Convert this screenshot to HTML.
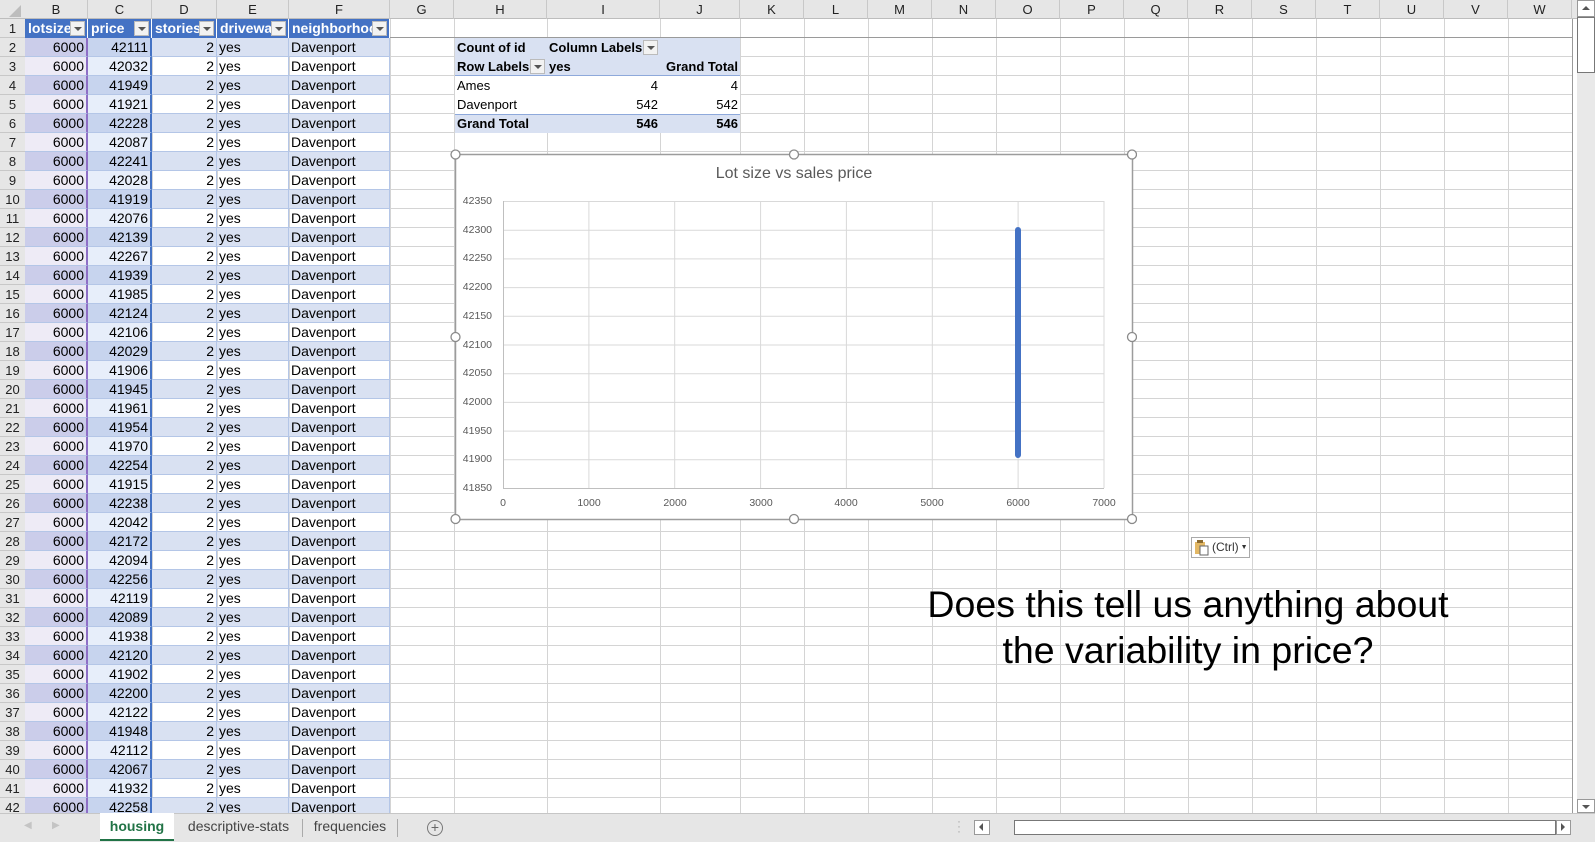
<!DOCTYPE html>
<html><head><meta charset="utf-8"><style>
*{margin:0;padding:0;box-sizing:border-box}
body{width:1595px;height:842px;overflow:hidden;background:#fff;font-family:"Liberation Sans",Arial,sans-serif;font-size:14px;color:#000;position:relative}
.abs{position:absolute}
.ch{position:absolute;top:0;height:19px;text-align:center;line-height:19px;font-size:13px;color:#222;border-right:1px solid #c8c8c8}
.rh{position:absolute;left:0;width:25px;height:19px;text-align:center;line-height:19px;font-size:13px;color:#222;background:#e6e6e6;border-bottom:1px solid #c8c8c8}
.tb .tr{position:absolute;left:25px;height:19px;display:flex;width:365px}
.tr i{font-style:normal;height:19px;line-height:19px;border-right:1px solid #b4c6e7;border-bottom:1px solid #b4c6e7;padding:0 2px;white-space:nowrap;overflow:hidden}
.tr i:nth-child(1){width:63px;text-align:right;background:#eeebf6;border-right:2px solid #8e6fc6}
.tr i:nth-child(2){width:64px;text-align:right;background:#e7eefa;border-right:2px solid #4472c4}
.tr i:nth-child(3){width:65px;text-align:right}
.tr i:nth-child(4){width:72px}
.tr i:nth-child(5){width:101px}
.tb .tr:nth-child(odd){background:#d9e1f2}
.tb .tr:nth-child(odd) i:nth-child(1){background:#cbcdea}
.tb .tr:nth-child(odd) i:nth-child(2){background:#c7d4ee}
.hd{position:absolute;top:19px;height:19px;background:#4472c4;color:#fff;font-weight:bold;line-height:19px;padding-left:3px;border-right:1px solid #fff;overflow:hidden;white-space:nowrap}
.dd{position:absolute;top:2px;right:2px;width:15px;height:15px;background:#f2f2f2;border:1px solid #bbb}
.dd:after{content:"";position:absolute;left:3px;top:5px;border-left:4px solid transparent;border-right:4px solid transparent;border-top:4px solid #555}
.pv{position:absolute;height:19px;line-height:19px;white-space:nowrap;font-size:13px}
.tab{position:absolute;top:813px;height:29px;line-height:27px;font-size:14px;color:#444;text-align:center}
</style></head><body>

<svg class="abs" style="left:0;top:0" width="1595" height="842">
<g stroke="#d4d4d4" stroke-width="1">
<path d="M88.5 19V813M152.5 19V813M217.5 19V813M289.5 19V813M390.5 19V813M454.5 19V813M547.5 19V813M660.5 19V813M740.5 19V813M804.5 19V813M868.5 19V813M932.5 19V813M996.5 19V813M1060.5 19V813M1124.5 19V813M1188.5 19V813M1252.5 19V813M1316.5 19V813M1380.5 19V813M1444.5 19V813M1508.5 19V813"/>
<path d="M25 56.5H1572M25 75.5H1572M25 94.5H1572M25 113.5H1572M25 132.5H1572M25 151.5H1572M25 170.5H1572M25 189.5H1572M25 208.5H1572M25 227.5H1572M25 246.5H1572M25 265.5H1572M25 284.5H1572M25 303.5H1572M25 322.5H1572M25 341.5H1572M25 360.5H1572M25 379.5H1572M25 398.5H1572M25 417.5H1572M25 436.5H1572M25 455.5H1572M25 474.5H1572M25 493.5H1572M25 512.5H1572M25 531.5H1572M25 550.5H1572M25 569.5H1572M25 588.5H1572M25 607.5H1572M25 626.5H1572M25 645.5H1572M25 664.5H1572M25 683.5H1572M25 702.5H1572M25 721.5H1572M25 740.5H1572M25 759.5H1572M25 778.5H1572M25 797.5H1572"/>
</g>
<path d="M25 37.5H1572" stroke="#9a9a9a"/>
<path d="M1572.5 19V813" stroke="#9a9a9a"/>
</svg>

<div class="abs" style="left:0;top:0;width:1577px;height:19px;background:#e6e6e6;border-bottom:1px solid #bdbdbd"></div>
<svg class="abs" style="left:8px;top:4px" width="14" height="14"><path d="M13 1V13H1Z" fill="#bdbdbd"/></svg>
<div class="ch" style="left:25px;width:63px">B</div><div class="ch" style="left:88px;width:64px">C</div><div class="ch" style="left:152px;width:65px">D</div><div class="ch" style="left:217px;width:72px">E</div><div class="ch" style="left:289px;width:101px">F</div><div class="ch" style="left:390px;width:64px">G</div><div class="ch" style="left:454px;width:93px">H</div><div class="ch" style="left:547px;width:113px">I</div><div class="ch" style="left:660px;width:80px">J</div><div class="ch" style="left:740px;width:64px">K</div><div class="ch" style="left:804px;width:64px">L</div><div class="ch" style="left:868px;width:64px">M</div><div class="ch" style="left:932px;width:64px">N</div><div class="ch" style="left:996px;width:64px">O</div><div class="ch" style="left:1060px;width:64px">P</div><div class="ch" style="left:1124px;width:64px">Q</div><div class="ch" style="left:1188px;width:64px">R</div><div class="ch" style="left:1252px;width:64px">S</div><div class="ch" style="left:1316px;width:64px">T</div><div class="ch" style="left:1380px;width:64px">U</div><div class="ch" style="left:1444px;width:64px">V</div><div class="ch" style="left:1508px;width:64px">W</div>

<div class="abs" style="left:0;top:19px;width:25px;height:794px;background:#e6e6e6;border-right:1px solid #bdbdbd"></div>
<div class="rh" style="top:19px">1</div><div class="rh" style="top:38px">2</div><div class="rh" style="top:57px">3</div><div class="rh" style="top:76px">4</div><div class="rh" style="top:95px">5</div><div class="rh" style="top:114px">6</div><div class="rh" style="top:133px">7</div><div class="rh" style="top:152px">8</div><div class="rh" style="top:171px">9</div><div class="rh" style="top:190px">10</div><div class="rh" style="top:209px">11</div><div class="rh" style="top:228px">12</div><div class="rh" style="top:247px">13</div><div class="rh" style="top:266px">14</div><div class="rh" style="top:285px">15</div><div class="rh" style="top:304px">16</div><div class="rh" style="top:323px">17</div><div class="rh" style="top:342px">18</div><div class="rh" style="top:361px">19</div><div class="rh" style="top:380px">20</div><div class="rh" style="top:399px">21</div><div class="rh" style="top:418px">22</div><div class="rh" style="top:437px">23</div><div class="rh" style="top:456px">24</div><div class="rh" style="top:475px">25</div><div class="rh" style="top:494px">26</div><div class="rh" style="top:513px">27</div><div class="rh" style="top:532px">28</div><div class="rh" style="top:551px">29</div><div class="rh" style="top:570px">30</div><div class="rh" style="top:589px">31</div><div class="rh" style="top:608px">32</div><div class="rh" style="top:627px">33</div><div class="rh" style="top:646px">34</div><div class="rh" style="top:665px">35</div><div class="rh" style="top:684px">36</div><div class="rh" style="top:703px">37</div><div class="rh" style="top:722px">38</div><div class="rh" style="top:741px">39</div><div class="rh" style="top:760px">40</div><div class="rh" style="top:779px">41</div><div class="rh" style="top:798px">42</div>

<div class="hd" style="left:25px;width:63px">lotsize<span class="dd"></span></div>
<div class="hd" style="left:88px;width:64px">price<span class="dd"></span></div>
<div class="hd" style="left:152px;width:65px">stories<span class="dd"></span></div>
<div class="hd" style="left:217px;width:72px">driveway<span class="dd"></span></div>
<div class="hd" style="left:289px;width:101px">neighborhood<span class="dd"></span></div>

<div class="tb">
<div class="tr" style="top:38px"><i>6000</i><i>42111</i><i>2</i><i>yes</i><i>Davenport</i></div>
<div class="tr" style="top:57px"><i>6000</i><i>42032</i><i>2</i><i>yes</i><i>Davenport</i></div>
<div class="tr" style="top:76px"><i>6000</i><i>41949</i><i>2</i><i>yes</i><i>Davenport</i></div>
<div class="tr" style="top:95px"><i>6000</i><i>41921</i><i>2</i><i>yes</i><i>Davenport</i></div>
<div class="tr" style="top:114px"><i>6000</i><i>42228</i><i>2</i><i>yes</i><i>Davenport</i></div>
<div class="tr" style="top:133px"><i>6000</i><i>42087</i><i>2</i><i>yes</i><i>Davenport</i></div>
<div class="tr" style="top:152px"><i>6000</i><i>42241</i><i>2</i><i>yes</i><i>Davenport</i></div>
<div class="tr" style="top:171px"><i>6000</i><i>42028</i><i>2</i><i>yes</i><i>Davenport</i></div>
<div class="tr" style="top:190px"><i>6000</i><i>41919</i><i>2</i><i>yes</i><i>Davenport</i></div>
<div class="tr" style="top:209px"><i>6000</i><i>42076</i><i>2</i><i>yes</i><i>Davenport</i></div>
<div class="tr" style="top:228px"><i>6000</i><i>42139</i><i>2</i><i>yes</i><i>Davenport</i></div>
<div class="tr" style="top:247px"><i>6000</i><i>42267</i><i>2</i><i>yes</i><i>Davenport</i></div>
<div class="tr" style="top:266px"><i>6000</i><i>41939</i><i>2</i><i>yes</i><i>Davenport</i></div>
<div class="tr" style="top:285px"><i>6000</i><i>41985</i><i>2</i><i>yes</i><i>Davenport</i></div>
<div class="tr" style="top:304px"><i>6000</i><i>42124</i><i>2</i><i>yes</i><i>Davenport</i></div>
<div class="tr" style="top:323px"><i>6000</i><i>42106</i><i>2</i><i>yes</i><i>Davenport</i></div>
<div class="tr" style="top:342px"><i>6000</i><i>42029</i><i>2</i><i>yes</i><i>Davenport</i></div>
<div class="tr" style="top:361px"><i>6000</i><i>41906</i><i>2</i><i>yes</i><i>Davenport</i></div>
<div class="tr" style="top:380px"><i>6000</i><i>41945</i><i>2</i><i>yes</i><i>Davenport</i></div>
<div class="tr" style="top:399px"><i>6000</i><i>41961</i><i>2</i><i>yes</i><i>Davenport</i></div>
<div class="tr" style="top:418px"><i>6000</i><i>41954</i><i>2</i><i>yes</i><i>Davenport</i></div>
<div class="tr" style="top:437px"><i>6000</i><i>41970</i><i>2</i><i>yes</i><i>Davenport</i></div>
<div class="tr" style="top:456px"><i>6000</i><i>42254</i><i>2</i><i>yes</i><i>Davenport</i></div>
<div class="tr" style="top:475px"><i>6000</i><i>41915</i><i>2</i><i>yes</i><i>Davenport</i></div>
<div class="tr" style="top:494px"><i>6000</i><i>42238</i><i>2</i><i>yes</i><i>Davenport</i></div>
<div class="tr" style="top:513px"><i>6000</i><i>42042</i><i>2</i><i>yes</i><i>Davenport</i></div>
<div class="tr" style="top:532px"><i>6000</i><i>42172</i><i>2</i><i>yes</i><i>Davenport</i></div>
<div class="tr" style="top:551px"><i>6000</i><i>42094</i><i>2</i><i>yes</i><i>Davenport</i></div>
<div class="tr" style="top:570px"><i>6000</i><i>42256</i><i>2</i><i>yes</i><i>Davenport</i></div>
<div class="tr" style="top:589px"><i>6000</i><i>42119</i><i>2</i><i>yes</i><i>Davenport</i></div>
<div class="tr" style="top:608px"><i>6000</i><i>42089</i><i>2</i><i>yes</i><i>Davenport</i></div>
<div class="tr" style="top:627px"><i>6000</i><i>41938</i><i>2</i><i>yes</i><i>Davenport</i></div>
<div class="tr" style="top:646px"><i>6000</i><i>42120</i><i>2</i><i>yes</i><i>Davenport</i></div>
<div class="tr" style="top:665px"><i>6000</i><i>41902</i><i>2</i><i>yes</i><i>Davenport</i></div>
<div class="tr" style="top:684px"><i>6000</i><i>42200</i><i>2</i><i>yes</i><i>Davenport</i></div>
<div class="tr" style="top:703px"><i>6000</i><i>42122</i><i>2</i><i>yes</i><i>Davenport</i></div>
<div class="tr" style="top:722px"><i>6000</i><i>41948</i><i>2</i><i>yes</i><i>Davenport</i></div>
<div class="tr" style="top:741px"><i>6000</i><i>42112</i><i>2</i><i>yes</i><i>Davenport</i></div>
<div class="tr" style="top:760px"><i>6000</i><i>42067</i><i>2</i><i>yes</i><i>Davenport</i></div>
<div class="tr" style="top:779px"><i>6000</i><i>41932</i><i>2</i><i>yes</i><i>Davenport</i></div>
<div class="tr" style="top:798px;height:15px;overflow:hidden"><i>6000</i><i>42258</i><i>2</i><i>yes</i><i>Davenport</i></div>
</div>

<div class="abs" style="left:455px;top:38px;width:285px;height:38px;background:#d9e1f2;border-bottom:1px solid #8ea9db"></div>
<div class="abs" style="left:455px;top:76px;width:285px;height:38px;background:#fff"></div>
<div class="abs" style="left:455px;top:114px;width:285px;height:19px;background:#d9e1f2;border-top:1px solid #8ea9db"></div>
<div class="pv" style="left:457px;top:38px;font-weight:bold">Count of id</div>
<div class="pv" style="left:549px;top:38px;font-weight:bold">Column Labels</div>
<div class="abs dd" style="left:643px;top:40px;right:auto;width:15px;height:15px"></div>
<div class="pv" style="left:457px;top:57px;font-weight:bold">Row Labels</div>
<div class="abs dd" style="left:530px;top:59px;right:auto;width:15px;height:15px"></div>
<div class="pv" style="left:549px;top:57px;font-weight:bold">yes</div>
<div class="pv" style="left:662px;top:57px;width:76px;text-align:right;font-weight:bold">Grand Total</div>
<div class="pv" style="left:457px;top:76px">Ames</div>
<div class="pv" style="left:549px;top:76px;width:109px;text-align:right">4</div>
<div class="pv" style="left:662px;top:76px;width:76px;text-align:right">4</div>
<div class="pv" style="left:457px;top:95px">Davenport</div>
<div class="pv" style="left:549px;top:95px;width:109px;text-align:right">542</div>
<div class="pv" style="left:662px;top:95px;width:76px;text-align:right">542</div>
<div class="pv" style="left:457px;top:114px;font-weight:bold">Grand Total</div>
<div class="pv" style="left:549px;top:114px;width:109px;text-align:right;font-weight:bold">546</div>
<div class="pv" style="left:662px;top:114px;width:76px;text-align:right;font-weight:bold">546</div>

<svg class="abs" style="left:450px;top:149px" width="687" height="376" font-family="Liberation Sans, sans-serif">
<rect x="5.5" y="5.5" width="677" height="365" fill="#fff" stroke="#9c9c9c" stroke-width="1.5"/>
<text x="344" y="29" text-anchor="middle" font-size="16" fill="#595959">Lot size vs sales price</text>
<g stroke="#d9d9d9" stroke-width="1">
<path d="M53 52.5H654M53 81.2H654M53 109.9H654M53 138.6H654M53 167.3H654M53 196H654M53 224.7H654M53 253.4H654M53 282.1H654M53 310.8H654"/>
<path d="M138.9 52V339M224.7 52V339M310.6 52V339M396.4 52V339M482.3 52V339M568.1 52V339M654 52V339"/>
</g>
<path d="M53.5 52V339.5H654" stroke="#bfbfbf" fill="none"/>
<g font-size="10.5" fill="#595959" text-anchor="end">
<text x="42" y="55">42350</text><text x="42" y="84">42300</text><text x="42" y="112">42250</text><text x="42" y="141">42200</text><text x="42" y="170">42150</text><text x="42" y="199">42100</text><text x="42" y="227">42050</text><text x="42" y="256">42000</text><text x="42" y="285">41950</text><text x="42" y="313">41900</text><text x="42" y="342">41850</text>
</g>
<g font-size="10.5" fill="#595959" text-anchor="middle">
<text x="53" y="357">0</text><text x="139" y="357">1000</text><text x="225" y="357">2000</text><text x="311" y="357">3000</text><text x="396" y="357">4000</text><text x="482" y="357">5000</text><text x="568" y="357">6000</text><text x="654" y="357">7000</text>
</g>
<path d="M568 81V306" stroke="#4472c4" stroke-width="6" stroke-linecap="round"/>
<g fill="#fff" stroke="#8a8a8a" stroke-width="1.3">
<circle cx="5.5" cy="5.5" r="4.5"/><circle cx="344" cy="5.5" r="4.5"/><circle cx="682" cy="5.5" r="4.5"/>
<circle cx="5.5" cy="188" r="4.5"/><circle cx="682" cy="188" r="4.5"/>
<circle cx="5.5" cy="370" r="4.5"/><circle cx="344" cy="370" r="4.5"/><circle cx="682" cy="370" r="4.5"/>
</g>
</svg>

<div class="abs" style="left:1191px;top:537px;width:59px;height:21px;background:#fff;border:1px solid #aaa;font-size:12px;line-height:19px;color:#333;padding-left:20px">(Ctrl)<span style="font-size:7px;vertical-align:2px"> ▼</span></div>
<svg class="abs" style="left:1194px;top:539px" width="16" height="17"><rect x="1" y="3" width="10" height="12" fill="#e3b865"/><rect x="3" y="1" width="6" height="3" fill="#8a6a30"/><rect x="6" y="7" width="8" height="9" fill="#fff" stroke="#666"/></svg>

<div class="abs" style="left:838px;top:581px;width:700px;text-align:center;font-size:37.5px;line-height:46px;color:#000">Does this tell us anything about<br>the variability in price?</div>

<div class="abs" style="left:1577px;top:0;width:18px;height:813px;background:#e9e9e9"></div>
<div class="abs" style="left:1577px;top:0;width:18px;height:17px;background:#fff;border:1px solid #999"></div>
<div class="abs" style="left:1582px;top:6px;border-left:4px solid transparent;border-right:4px solid transparent;border-bottom:4px solid #555"></div>
<div class="abs" style="left:1577px;top:17px;width:18px;height:56px;background:#fff;border:1px solid #777"></div>
<div class="abs" style="left:1577px;top:799px;width:18px;height:14px;background:#fff;border:1px solid #999"></div>
<div class="abs" style="left:1582px;top:805px;border-left:4px solid transparent;border-right:4px solid transparent;border-top:4px solid #555"></div>

<div class="abs" style="left:0;top:813px;width:1595px;height:29px;background:#e6e6e6;border-top:1px solid #c6c6c6"></div>
<div class="abs" style="left:24px;top:820px;color:#c4c4c4;font-size:10px">◀</div>
<div class="abs" style="left:52px;top:820px;color:#c4c4c4;font-size:10px">▶</div>
<div class="tab" style="left:100px;width:74px;background:#fff;color:#217346;font-weight:bold;border-bottom:2px solid #217346;height:28px;top:813px">housing</div>
<div class="tab" style="left:174px;width:129px">descriptive-stats</div>
<div class="abs" style="left:302px;top:819px;width:1px;height:18px;background:#aaa"></div>
<div class="tab" style="left:303px;width:94px">frequencies</div>
<div class="abs" style="left:397px;top:819px;width:1px;height:18px;background:#aaa"></div>
<div class="abs" style="left:427px;top:820px;width:16px;height:16px;border:1.5px solid #777;border-radius:50%;text-align:center;line-height:13px;font-size:14px;color:#666">+</div>
<div class="abs" style="left:957px;top:819px;color:#aaa;font-size:12px;line-height:5px">·<br>·<br>·</div>
<div class="abs" style="left:974px;top:820px;width:16px;height:15px;background:#fff;border:1px solid #999"></div>
<div class="abs" style="left:979px;top:823px;border-top:4px solid transparent;border-bottom:4px solid transparent;border-right:4px solid #555"></div>
<div class="abs" style="left:1014px;top:820px;width:542px;height:15px;background:#fff;border:1px solid #777"></div>
<div class="abs" style="left:1556px;top:820px;width:15px;height:15px;background:#fff;border:1px solid #999"></div>
<div class="abs" style="left:1561px;top:823px;border-top:4px solid transparent;border-bottom:4px solid transparent;border-left:4px solid #555"></div>
</body></html>
